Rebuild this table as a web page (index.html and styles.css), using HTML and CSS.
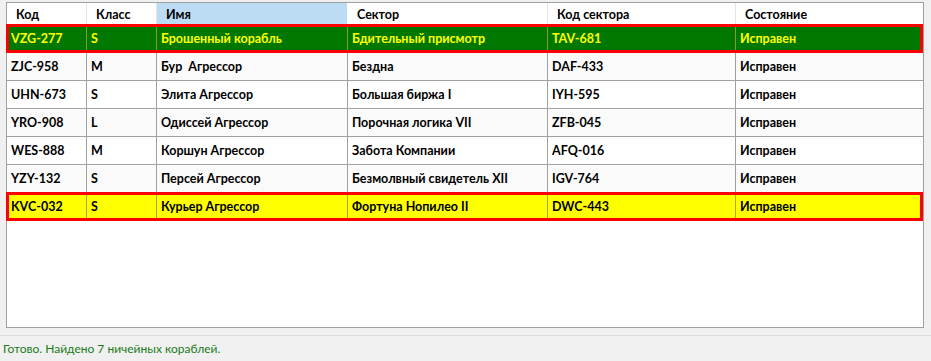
FILE: index.html
```html
<!DOCTYPE html>
<html lang="ru">
<head>
<meta charset="utf-8">
<title>Корабли</title>
<link rel="stylesheet" href="styles.css">
</head>
<body>
<div class="window">
  <div class="grid">
    <div class="head">
      <div class="hc">Код</div>
      <div class="hc">Класс</div>
      <div class="hc sorted">Имя</div>
      <div class="hc">Сектор</div>
      <div class="hc">Код сектора</div>
      <div class="hc">Состояние</div>
    </div>
    <div class="row green mark">
      <div class="c">VZG-277</div><div class="c">S</div><div class="c">Брошенный корабль</div><div class="c">Бдительный присмотр</div><div class="c">TAV-681</div><div class="c">Исправен</div>
    </div>
    <div class="row alt">
      <div class="c">ZJC-958</div><div class="c">M</div><div class="c">Бур&nbsp; Агрессор</div><div class="c">Бездна</div><div class="c">DAF-433</div><div class="c">Исправен</div>
    </div>
    <div class="row">
      <div class="c">UHN-673</div><div class="c">S</div><div class="c">Элита Агрессор</div><div class="c">Большая биржа I</div><div class="c">IYH-595</div><div class="c">Исправен</div>
    </div>
    <div class="row alt">
      <div class="c">YRO-908</div><div class="c">L</div><div class="c">Одиссей Агрессор</div><div class="c">Порочная логика VII</div><div class="c">ZFB-045</div><div class="c">Исправен</div>
    </div>
    <div class="row">
      <div class="c">WES-888</div><div class="c">M</div><div class="c">Коршун Агрессор</div><div class="c">Забота Компании</div><div class="c">AFQ-016</div><div class="c">Исправен</div>
    </div>
    <div class="row alt">
      <div class="c">YZY-132</div><div class="c">S</div><div class="c">Персей Агрессор</div><div class="c">Безмолвный свидетель XII</div><div class="c">IGV-764</div><div class="c">Исправен</div>
    </div>
    <div class="row yellow mark">
      <div class="c">KVC-032</div><div class="c">S</div><div class="c">Курьер Агрессор</div><div class="c">Фортуна Нопилео II</div><div class="c">DWC-443</div><div class="c">Исправен</div>
    </div>
  </div>
  <div class="status">Готово. Найдено 7 ничейных кораблей.</div>
</div>
</body>
</html>
```

FILE: styles.css
```css
html, body {
  margin: 0;
  padding: 0;
}

body {
  background: #f0f0f0;
  font-family: Lato, "Open Sans", sans-serif;
  font-size: 12.5px;
  color: #000;
  width: 931px;
  height: 361px;
  overflow: hidden;
}

.window {
  display: flex;
  flex-direction: column;
  height: 361px;
}

/* list view */
.grid {
  margin: 2px 7px 0 6px;
  height: 324px;
  border: 1px solid #a0a0a0;
  background: #fff;
  display: flex;
  flex-direction: column;
}

.head,
.row {
  display: grid;
  grid-template-columns: 80px 70px 191px 200px 188px 1fr;
}

.head {
  height: 22px;
}

.hc {
  padding-left: 9px;
  line-height: 23px;
  font-weight: 700;
  border-right: 1px solid #e5e5e5;
  white-space: nowrap;
  overflow: hidden;
}

.hc:last-child {
  border-right: none;
}

.hc.sorted {
  background: #bcdcf4;
  border-right-color: #fff;
}

.row {
  height: 27px;
  border-bottom: 1px solid #a0a0a0;
  font-weight: 700;
  position: relative;
}

.row.alt {
  background: #fafafa;
}

.c {
  padding-left: 4px;
  line-height: 28px;
  border-right: 1px solid #a0a0a0;
  white-space: nowrap;
  overflow: hidden;
}

.c:last-child {
  border-right: none;
}

.row.green {
  background: #007800;
  color: #ffff00;
  border-bottom-color: #7c9a00;
}

.row.green .c {
  border-right-color: #8c9c1c;
}

.row.yellow {
  background: #ffff00;
  color: #000;
  border-bottom-color: #b8b800;
}

.row.yellow .c {
  border-right-color: #a8a830;
}

/* red selection frame drawn over the row */
.row.mark::after {
  content: "";
  position: absolute;
  left: -1px;
  right: 0;
  top: -1px;
  bottom: -1px;
  border: 3px solid #ff0000;
  pointer-events: none;
}

.status {
  margin-top: 7px;
  border-top: 1px solid #dcdcdc;
  padding: 5px 3px 0;
  color: #1a7a1a;
  font-size: 12px;
  line-height: 16px;
}
```
